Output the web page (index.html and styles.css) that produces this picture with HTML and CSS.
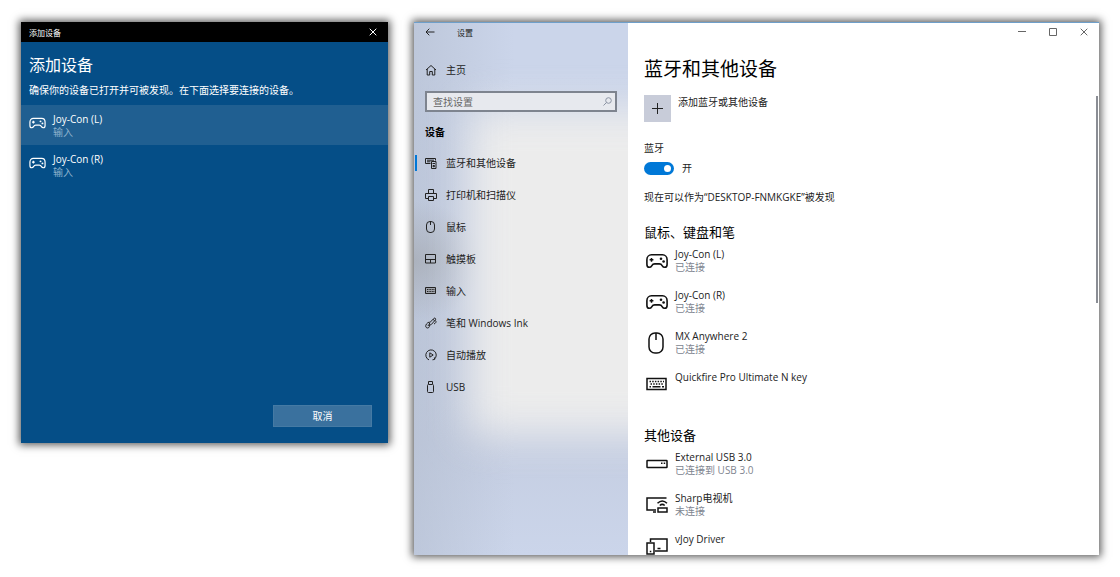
FILE: index.html
```html
<!DOCTYPE html>
<html lang="zh-CN">
<head>
    <meta charset="UTF-8">
    <meta name="viewport" content="width=device-width, initial-scale=1.0">
    <title>蓝牙和其他设备</title>
    <link rel="stylesheet" href="styles.css">
</head>
<body>
    <!-- Shared icons -->
    <svg class="sprite" aria-hidden="true">
        <symbol id="gamepad" viewBox="0 0 22 16">
            <path d="M5.500 1.800h11c2.600 0 4.600 2 4.600 5v4.400c0 2-1 3.100-2.400 3.100-1.200 0-1.900-.6-2.400-1.500-.8-1.400-1.500-1.900-3-1.900H8.700c-1.500 0-2.200.5-3 1.900-.5.9-1.200 1.500-2.400 1.500C1.900 14.300.9 13.200.9 11.200V6.800c0-3 2-5 4.600-5z" fill="none" stroke="currentColor" stroke-width="1.600"/>
            <path d="M5.500 4.900v3.800M3.600 6.800h3.800" stroke="currentColor" stroke-width="1.500"/>
            <circle cx="15" cy="5.800" r="1.300" fill="currentColor"/>
            <circle cx="17.600" cy="8.500" r="1.300" fill="currentColor"/>
        </symbol>
        <symbol id="close" viewBox="0 0 8 8">
            <path d="M.7.7l6.600 6.600M7.300.7L.7 7.300" stroke="currentColor" stroke-width="1"/>
        </symbol>
    </svg>

    <section class="window dialog">
        <header class="titlebar">
            <span class="titlebar-text">添加设备</span>
            <button class="caption-button" aria-label="关闭"><svg width="8" height="8"><use href="#close"/></svg></button>
        </header>
        <h1>添加设备</h1>
        <p class="hint">确保你的设备已打开并可被发现。在下面选择要连接的设备。</p>
        <ul class="found-list">
            <li>
                <button class="found selected">
                    <svg class="found-icon" width="17" height="12"><use href="#gamepad"/></svg>
                    <span class="device-text">Joy-Con (L)<small>输入</small></span>
                </button>
            </li>
            <li>
                <button class="found">
                    <svg class="found-icon" width="17" height="12"><use href="#gamepad"/></svg>
                    <span class="device-text">Joy-Con (R)<small>输入</small></span>
                </button>
            </li>
        </ul>
        <button class="cancel">取消</button>
    </section>

    <section class="window settings">
        <aside class="sidebar">
            <header class="titlebar">
                <button class="back" aria-label="返回">
                    <svg width="10" height="8" viewBox="0 0 10 8" fill="none" stroke="currentColor"><path d="M9.500 4H1M4.300.7L1 4l3.300 3.300"/></svg>
                </button>
                <span class="titlebar-text">设置</span>
            </header>
            <a class="nav-link home" href="#">
                <svg width="12" height="12" viewBox="0 0 12 12" fill="none" stroke="currentColor"><path d="M1 6l5-4.500L11 6M2.200 5v6h2.500V7.500h2.600V11h2.500V5"/></svg>
                主页
            </a>
            <div class="search">
                <input type="text" placeholder="查找设置" aria-label="查找设置">
                <svg class="search-icon" width="9" height="9" viewBox="0 0 9 9" fill="none" stroke="currentColor"><circle cx="5.500" cy="3.500" r="2.800"/><path d="M3.500 5.500L.5 8.500"/></svg>
            </div>
            <h2 class="nav-title">设备</h2>
            <nav>
                <a class="nav-link current" href="#">
                    <svg width="12" height="12" viewBox="0 0 12 12" fill="none" stroke="currentColor"><path d="M5.500 6.500h-5v-5h10v2M2 3.200h7M2 4.800h3.500"/><path d="M6.500 4.500h4.500v7H6.500z"/><path d="M7.500 6.500h2.500M8 8.500h1.500v1.200H8z"/></svg>
                    蓝牙和其他设备
                </a>
                <a class="nav-link" href="#">
                    <svg width="12" height="12" viewBox="0 0 12 12" fill="none" stroke="currentColor"><path d="M3.500 4.500v-4h5v4M3.500 9.500h-3v-5h11v5h-3M3.500 7.500h5v4h-5z"/></svg>
                    打印机和扫描仪
                </a>
                <a class="nav-link" href="#">
                    <svg width="12" height="12" viewBox="0 0 12 12" fill="none" stroke="currentColor"><rect x="1.500" y=".5" width="8" height="11" rx="3.500"/><path d="M5.500 .5V4"/></svg>
                    鼠标
                </a>
                <a class="nav-link" href="#">
                    <svg width="12" height="12" viewBox="0 0 12 12" fill="none" stroke="currentColor"><path d="M.5 1.500h10v8.500H.5zM.5 6.500h10M5.500 6.500V10"/></svg>
                    触摸板
                </a>
                <a class="nav-link" href="#">
                    <svg width="12" height="12" viewBox="0 0 12 12" fill="none" stroke="currentColor"><path d="M.5 2.500h10v6H.5z" fill="#a0a4ac"/><path d="M2 4.500h7.500M2 6.500h7.500" stroke-dasharray="1 .6"/></svg>
                    输入
                </a>
                <a class="nav-link" href="#">
                    <svg width="12" height="12" viewBox="0 0 12 12" fill="none" stroke="currentColor"><path d="M4 8.500l.7-2.800L9 1.300c.8-.8 2.300.5 1.500 1.500L6.300 7.500 4 8.500zM8 2.300l1.700 1.600"/><path d="M4.500 5C2 5.500.3 8 .8 9.800c.6 1.800 3.300 1.500 3.600-.3.200-1-.8-1.600-1.700-1.200M10.500 3.500c1.200 1.200.2 2.800-1.500 3.500"/></svg>
                    笔和 Windows Ink
                </a>
                <a class="nav-link" href="#">
                    <svg width="12" height="12" viewBox="0 0 12 12" fill="none" stroke="currentColor"><path d="M4 10.900A5.200 5.200 0 1 1 9.500 10M7.500 10.800l2.200-.4-.3-2"/><path d="M4.800 3.800v4.400L8.200 6z"/></svg>
                    自动播放
                </a>
                <a class="nav-link" href="#">
                    <svg width="12" height="12" viewBox="0 0 12 12" fill="none" stroke="currentColor"><path d="M3.500 3V.5h4V3"/><rect x="2.500" y="3.500" width="6" height="8" rx="1"/></svg>
                    USB
                </a>
            </nav>
        </aside>

        <main class="content">
            <header class="titlebar">
                <button class="caption-button" aria-label="最小化"><svg width="8" height="8" viewBox="0 0 8 8" stroke="currentColor"><path d="M0 3.500h8"/></svg></button>
                <button class="caption-button" aria-label="最大化"><svg width="8" height="8" viewBox="0 0 8 8" fill="none" stroke="currentColor"><path d="M.5.5h7v7h-7z"/></svg></button>
                <button class="caption-button" aria-label="关闭"><svg width="8" height="8"><use href="#close"/></svg></button>
            </header>
            <h1>蓝牙和其他设备</h1>
            <button class="add">
                <span class="add-box"><svg width="11" height="11" viewBox="0 0 11 11" stroke="currentColor"><path d="M5.500 0v11M0 5.500h11"/></svg></span>
                <span class="add-text">添加蓝牙或其他设备</span>
            </button>
            <label class="switch-label" for="bluetooth">蓝牙</label>
            <div class="switch-row">
                <input class="switch" type="checkbox" id="bluetooth" checked>
                <span>开</span>
            </div>
            <p class="discover">现在可以作为“DESKTOP-FNMKGKE”被发现</p>

            <h2>鼠标、键盘和笔</h2>
            <ul class="devices">
                <li>
                    <svg width="22" height="16"><use href="#gamepad"/></svg>
                    <span class="device-text">Joy-Con (L)<small>已连接</small></span>
                </li>
                <li>
                    <svg width="22" height="16"><use href="#gamepad"/></svg>
                    <span class="device-text">Joy-Con (R)<small>已连接</small></span>
                </li>
                <li>
                    <svg width="22" height="22" viewBox="0 0 22 22" fill="none" stroke="currentColor" stroke-width="1.500"><rect x="3" y="1" width="14" height="20" rx="6"/><path d="M10 1v7"/></svg>
                    <span class="device-text">MX Anywhere 2<small>已连接</small></span>
                </li>
                <li>
                    <svg width="22" height="14" viewBox="0 0 22 14" fill="none" stroke="currentColor" stroke-width="1.500"><path d="M1 1.500h19v11H1z"/><path d="M3.500 4.500H18M4.500 7H17" stroke-dasharray="1.500 1.200"/><path d="M3.500 9.800H5M6.500 9.800h8M16 9.800h2"/></svg>
                    <span class="device-text">Quickfire Pro Ultimate N key</span>
                </li>
            </ul>

            <h2>其他设备</h2>
            <ul class="devices">
                <li>
                    <svg width="22" height="10" viewBox="0 0 22 10" fill="none" stroke="currentColor" stroke-width="1.500"><rect x="1" y="1.500" width="20" height="7" rx=".5"/><path d="M15 4.200h1.500M17.700 4.200h1.500"/></svg>
                    <span class="device-text">External USB 3.0<small>已连接到 USB 3.0</small></span>
                </li>
                <li>
                    <svg width="22" height="18" viewBox="0 0 22 18" fill="none" stroke="currentColor" stroke-width="1.500"><path d="M20.500 2H1v12h9M7 16h3"/><path d="M12 12h9v4h-9z"/><path d="M11.500 7.300c3-3 6.500-3 9.500 0M13.800 9.500c1.600-1.500 3.300-1.500 4.900 0"/></svg>
                    <span class="device-text">Sharp电视机<small>未连接</small></span>
                </li>
                <li>
                    <svg width="22" height="18" viewBox="0 0 22 18" fill="none" stroke="currentColor" stroke-width="1.500"><path d="M4.500 5V2H21v12H9"/><path d="M1 6h7v11H1zM3.800 14.500h1.500M11.500 11.500h3"/></svg>
                    <span class="device-text">vJoy Driver</span>
                </li>
            </ul>
            <div class="scroll-thumb"></div>
        </main>
    </section>
</body>
</html>
```

FILE: styles.css
```css
* {
    box-sizing: border-box;
}

body {
    display: flex;
    align-items: flex-start;
    gap: 26px;
    margin: 0;
    padding: 22px 21px;
    font-family: "Open Sans", "Noto Sans CJK SC", sans-serif;
    font-size: 10px;
    line-height: 13px;
    color: #222;
    background-color: #fff;
}

h1, h2, p, ul {
    margin: 0;
    padding: 0;
    font-weight: normal;
}

ul {
    list-style: none;
}

button, input {
    padding: 0;
    border: none;
    font: inherit;
    color: inherit;
    background: none;
}

svg {
    flex-shrink: 0;
}

.sprite {
    position: absolute;
    width: 0;
    height: 0;
}

.window {
    box-shadow: 0 0 8px 2px rgba(0, 0, 0, 0.65);
}

.titlebar {
    display: flex;
    align-items: center;
    height: 20px;
    font-size: 8px;
}

.caption-button {
    display: flex;
    align-items: center;
    justify-content: center;
    width: 31px;
    height: 20px;
}

.device-text small {
    display: block;
    font-size: 10px;
    color: #808590;
}

/* Add device dialog */
.dialog {
    display: flex;
    flex-direction: column;
    flex: 367 1 0;
    color: #fff;
    background-color: #054e87;
}

.dialog .titlebar {
    justify-content: space-between;
    padding-left: 8px;
    background-color: #000;
}

.dialog h1 {
    padding: 0 8px;
    margin-top: 11px;
    font-size: 16px;
    line-height: 24px;
}

.hint {
    margin: 7px 8px 8px;
}

.found-list {
    min-height: 300px;
}

.found {
    display: flex;
    gap: 7px;
    width: 100%;
    height: 40px;
    padding: 8px 8px 6px;
    text-align: left;
}

.found.selected {
    background-color: #205f91;
}

.found-icon {
    margin-top: 4px;
}

.found small {
    color: #8fb2cd;
}

.cancel {
    align-self: flex-end;
    width: 99px;
    height: 22px;
    margin: 0 16px 16px;
    border: 1px solid #457aa4;
    background-color: #3a719e;
}

/* Settings window */
.settings {
    display: flex;
    flex: 685 1 0;
    height: calc(100vh - 44px);
    min-height: 400px;
    overflow: hidden;
    border-top: 1px solid #6e9fca;
    background-color: #fff;
}

.settings .titlebar {
    height: 18px;
}

.sidebar {
    position: relative;
    z-index: 0;
    flex: 0 0 214px;
    overflow: hidden;
    background-color: #c8d1e5;
    background-image:
        radial-gradient(ellipse 70px 60px at 0 238px, rgba(165, 170, 178, 0.7), transparent),
        linear-gradient(to right, rgba(180, 190, 208, 0.6), transparent 100px),
        linear-gradient(#cbd5ea, #cbd5ea 50px, #c5cee2 420px, #cbd5ea);
}

/* soft light patch behind the menu */
.sidebar::before {
    content: "";
    position: absolute;
    z-index: -1;
    top: 85px;
    bottom: 120px;
    left: 55px;
    right: -80px;
    background-color: #ececec;
    filter: blur(20px);
}

.back {
    display: flex;
    margin: 0 22px 0 11px;
}

.nav-link {
    display: flex;
    align-items: center;
    gap: 9px;
    height: 32px;
    padding-left: 11px;
    color: #222;
    text-decoration: none;
}

.nav-link.home {
    margin-top: 13px;
}

.nav-link.current {
    position: relative;
}

.nav-link.current::before {
    content: "";
    position: absolute;
    left: 1px;
    width: 2px;
    height: 16px;
    background-color: #0078d7;
}

.search {
    position: relative;
    margin: 5px 11px 10px;
}

.search input {
    display: block;
    width: 100%;
    height: 21px;
    padding: 0 24px 0 6px;
    border: 2px solid #7e848f;
    background-color: #e7e9ee;
}

.search input::placeholder {
    color: #666;
}

.search-icon {
    position: absolute;
    top: 6px;
    right: 5px;
    color: #8b93a3;
}

.nav-title {
    margin: 0 11px 5px;
    font-size: 10px;
    font-weight: bold;
    line-height: 20px;
    color: #000;
}

.content {
    position: relative;
    flex: 1;
    padding-left: 16px;
}

.content .titlebar {
    justify-content: flex-end;
    color: #666;
}

.content h1 {
    margin-top: 15px;
    font-size: 19px;
    line-height: 26px;
    color: #000;
}

.add {
    display: flex;
    gap: 7px;
    margin-top: 13px;
}

.add-box {
    display: flex;
    align-items: center;
    justify-content: center;
    width: 27px;
    height: 27px;
    background-color: #c8ccd9;
}

.add-text {
    padding-top: 1px;
}

.switch-label {
    display: block;
    margin-top: 20px;
}

.switch-row {
    display: flex;
    align-items: center;
    gap: 8px;
    margin-top: 7px;
}

.switch {
    display: flex;
    align-items: center;
    justify-content: flex-end;
    width: 30px;
    height: 13px;
    margin: 0;
    padding: 0 3px;
    appearance: none;
    border-radius: 7px;
    background-color: #0078d7;
}

.switch::before {
    content: "";
    width: 7px;
    height: 7px;
    border-radius: 50%;
    background-color: #fff;
}

.switch:not(:checked) {
    justify-content: flex-start;
    background-color: #999;
}

.discover {
    margin-top: 16px;
}

.content h2 {
    margin: 18px 0 6px;
    font-size: 13px;
    line-height: 20px;
    color: #000;
}

.content .devices + h2 {
    margin-top: 13px;
}

.devices li {
    display: flex;
    align-items: flex-start;
    gap: 7px;
    height: 41px;
    padding-left: 2px;
}

.devices svg {
    height: 26px;
    color: #111;
}

.scroll-thumb {
    position: absolute;
    top: 73px;
    right: 1px;
    width: 2px;
    height: 39%;
    background-color: #8a8d94;
}
```
